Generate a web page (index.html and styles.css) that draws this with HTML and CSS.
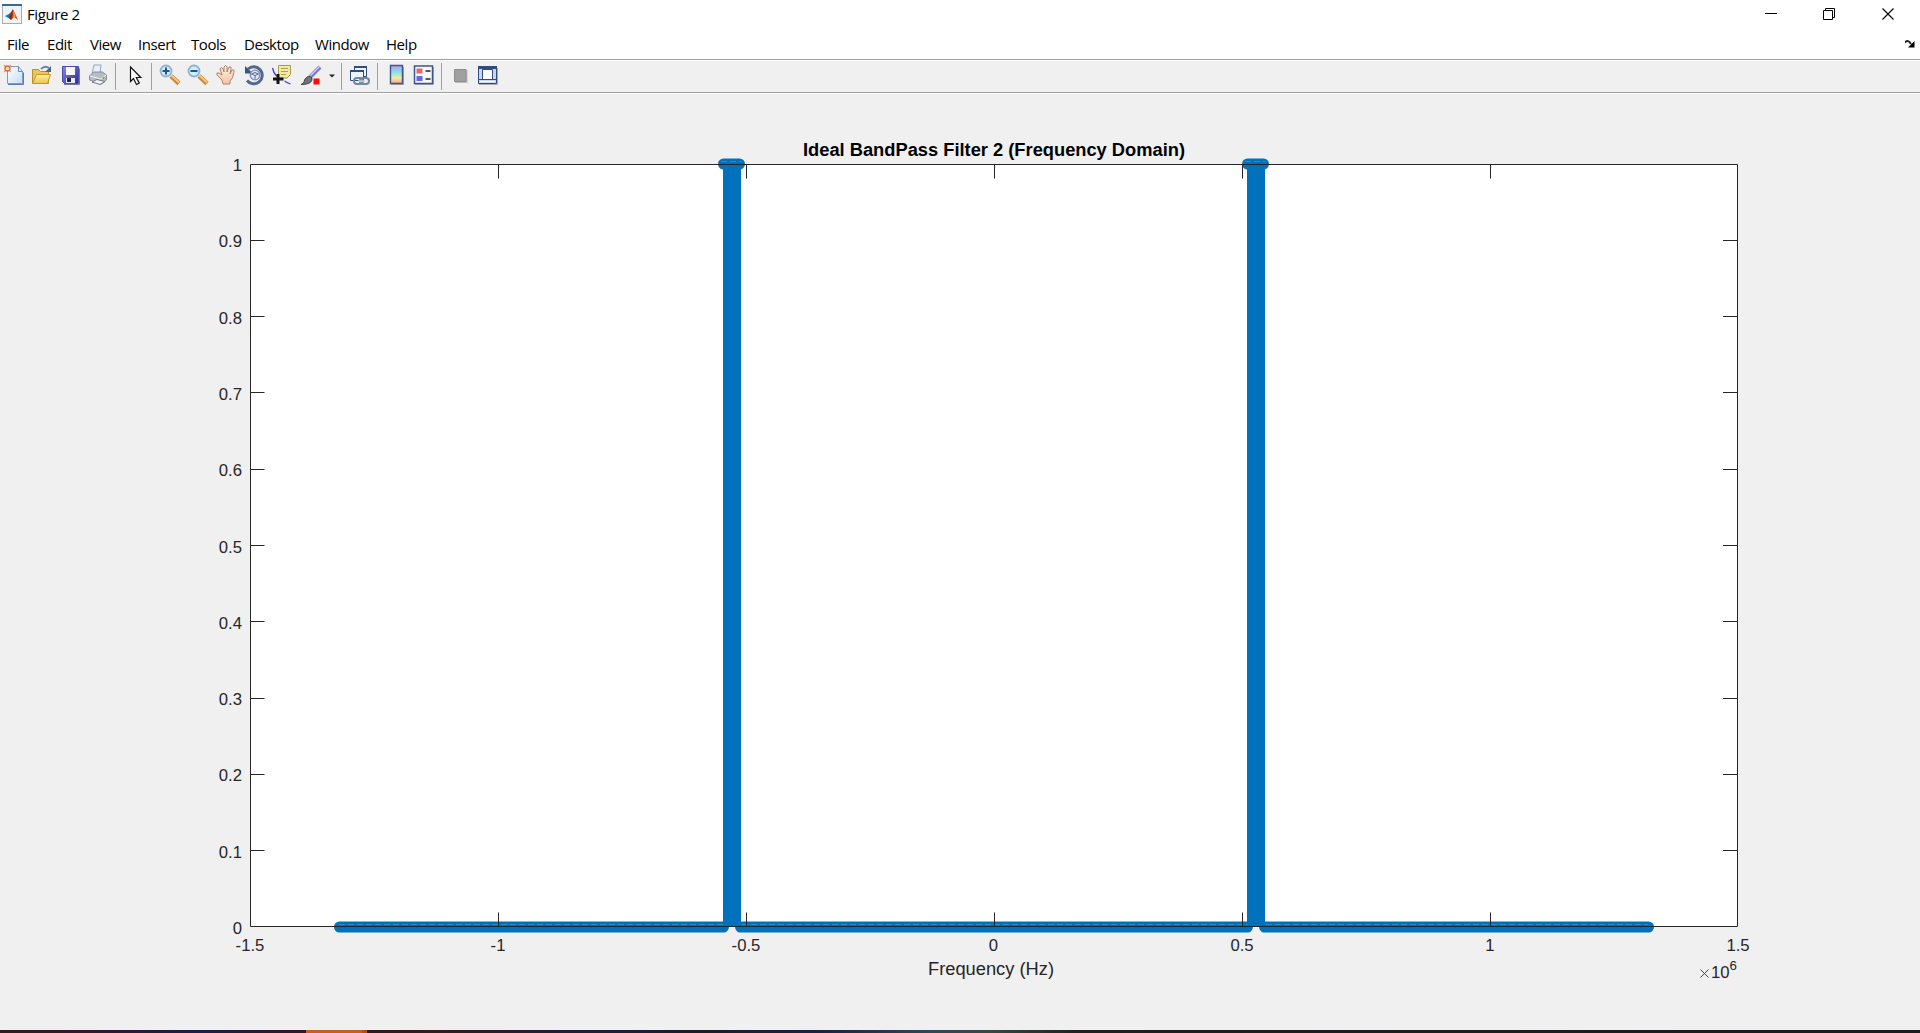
FILE: index.html
```html
<!DOCTYPE html>
<html lang="en">
<head>
<meta charset="utf-8">
<title>Figure 2</title>
<link rel="stylesheet" href="styles.css">
</head>
<body>
<header class="titlebar">
  <svg class="logo" width="20" height="20" viewBox="0 0 20 20"><rect x=".5" y=".5" width="19" height="19" fill="#f0f3f5" stroke="#a3adb3"/><path d="M0 1h20" stroke="#376b91" stroke-width="2"/><path d="M3 12l4-2 4-4 1 3-4 6z" fill="#28739b"/><path d="M7 14l4-9 5 11-4-3-3 3z" fill="#d65016"/><path d="M11 5l-1 9-1 2-2-3z" fill="#7e2d20"/><path d="M11.500 6l2 7-2 1z" fill="#f3a43a"/></svg>
  <span class="window-name">Figure 2</span>
  <svg class="controls" width="144" height="28" viewBox="0 0 144 28"><g fill="none" stroke="#000"><path d="M5 13.500h12"/><path d="M63.500 10.500h9v9h-9zM65.500 10.500v-2h9v9h-2"/><path d="M122.500 8.500l11 11m0-11l-11 11" stroke-width="1.100"/></g></svg>
</header>
<nav class="menubar">
  <span class="m-file">File</span><span class="m-edit">Edit</span><span class="m-view">View</span><span class="m-insert">Insert</span><span class="m-tools">Tools</span><span class="m-desktop">Desktop</span><span class="m-window">Window</span><span class="m-help">Help</span>
  <svg class="dock" width="10" height="8" viewBox="0 0 10 8"><path d="M0 2.500Q3-1 6 4" fill="none" stroke="#222" stroke-width="2"/><path d="M9.500 1v6.500H3z" fill="#000"/></svg>
</nav>
<div class="toolbar">
<svg width="520" height="31" viewBox="0 61 520 31">
  <defs>
    <linearGradient id="page" x1="0" y1="0" x2="1" y2="1"><stop stop-color="#fff"/><stop offset="1" stop-color="#c5dcf7"/></linearGradient>
    <linearGradient id="gold" x1="0" y1="0" x2="0" y2="1"><stop stop-color="#fff09a"/><stop offset="1" stop-color="#edc24d"/></linearGradient>
    <linearGradient id="disk" x1="0" y1="0" x2="1" y2="1"><stop stop-color="#8889e6"/><stop offset="1" stop-color="#2c2d91"/></linearGradient>
    <linearGradient id="spectrum" x1="0" y1="0" x2="0" y2="1"><stop stop-color="#b79df0"/><stop offset=".35" stop-color="#85dcf0"/><stop offset=".7" stop-color="#f3ec9a"/><stop offset="1" stop-color="#f5a38e"/></linearGradient>
    <linearGradient id="skin" x1="0" y1="0" x2="0" y2="1"><stop stop-color="#fff2e4"/><stop offset="1" stop-color="#f4c6a1"/></linearGradient>
  </defs>
  <path d="M115.500 63v27M151.500 63v27M341.500 63v27M377.500 63v27M441.500 63v27" stroke="#a0a0a0"/>
  <path d="M7.500 66.500h11l4 5v12h-15z" fill="url(#page)" stroke="#7f9bc8"/><path d="M18.500 66.500v5h4" fill="none" stroke="#6b87b4"/><path d="M8 84.500h15.500v-12" fill="none" stroke="#5c78a8"/><path d="M4 65l7 7m0-7l-7 7" stroke="#f0a078" stroke-width="1.300"/><circle cx="7.500" cy="68.500" r="2.500" fill="#ffd9a0" stroke="#d86a3c" stroke-width="1.300"/>
  <path d="M32.500 83.500v-14h6l2 2h8v12z" fill="#e9c85b" stroke="#b8922c"/><path d="M32.500 83.500l4-9h14l-3 9z" fill="url(#gold)" stroke="#c09a2c"/><path d="M41 69q4-4 8-1" fill="none" stroke="#6483ad" stroke-width="1.800"/><path d="M51 66v6h-6z" fill="#49678f"/>
  <path d="M62.500 66.500h16v17h-14l-2-2z" fill="url(#disk)" stroke="#4a4bb0"/><path d="M66 67h9v8h-9z" fill="#f4f6fc"/><path d="M66 78h9v5h-9z" fill="#e9edf5"/><path d="M67 78h4v4h-4z" fill="#222554"/><path d="M64 84.500h15.500v-16" fill="none" stroke="#7778ad"/>
  <path d="M92 74l2-9h7l-1 9z" fill="#e6f0ff" stroke="#8fa4c6"/><path d="M89.500 76l4-4h9l4 3v5l-5 4-12-4z" fill="#b9bcc2" stroke="#8a8d94"/><path d="M90 76l11 3 5-4" fill="none" stroke="#f5f5f5"/><path d="M92 82l8 2.500 5-3-8-2z" fill="#eef3f8" stroke="#73777d"/><circle cx="103.500" cy="78" r="1" fill="#61a64e"/>
  <path d="M130.500 67v14.500l3-3 3 6 2.800-1.400-3-5.600h4.500z" fill="#fff" stroke="#111" stroke-width="1.200"/>
  <g id="lens"><path d="M171 76l8 7.500" stroke="#c58a3b" stroke-width="4.500"/><path d="M171 75l8 7.500" stroke="#f8c57a" stroke-width="2"/><circle cx="166" cy="71" r="5.500" fill="#cfeffd" stroke="#8fb0d8" stroke-width="1.800"/></g><path d="M162.500 71h7m-3.500-3.500v7" stroke="#24508f" stroke-width="2"/>
  <use href="#lens" x="28"/><path d="M190.500 71h7" stroke="#24508f" stroke-width="2"/>
  <path d="M223 84l-1-4-5-5q-1-3 2-2l3 2-2-6q1-3 3 0l1 3v-5q2-3 3 0v5l2-5q3-1 2 2l-1 5 2-4q3-1 2 2-1 7-4 9v3z" fill="url(#skin)" stroke="#ab8270"/>
  <path d="M248 69A8.500 8.500 0 1 1 247 80.500" fill="none" stroke="#53678f" stroke-width="3"/><path d="M245 66v7.500h8z" fill="#3c527f"/><circle cx="255" cy="75" r="4.800" fill="#e5e9f3" stroke="#7b8bab" stroke-width="1.300"/><path d="M251.500 74l3.500-1.500 3.500 1.500-3.500 1.500zM255 75.500v3.500" stroke="#536894" fill="none"/>
  <path d="M272.500 68q1 5 4 8m8 5q3 2 6 3" fill="none" stroke="#3d38ff" stroke-width="1.300"/><path d="M278.500 65.500h12v9l-3.500 3.500h-8.500z" fill="#f1eb9d" stroke="#a39b56"/><path d="M281 68.500h7m-7 3h7m-7 3h5" stroke="#a69e66"/><path d="M273 79h10.500m-5.500-5v10" stroke="#151515" stroke-width="3"/>
  <path d="M310.500 76.500L320 67" stroke="#7478c2" stroke-width="4"/><path d="M310.500 75.500l9-9" stroke="#cdd0f8" stroke-width="1.500"/><path d="M301 84.500q3 0 4-5.500 4-5 7-1 1 6.500-11 6.500" fill="#707378" stroke="#404348"/><path d="M313.500 78.500h6v6h-6z" fill="#f90c0c"/><path d="M329 74.500h6l-3 3z" fill="#222"/>
  <path d="M354.500 66.500h12v10h-12z" fill="#edf4ff" stroke="#304d80"/><path d="M354 67h13" stroke="#304d80" stroke-width="2"/><path d="M350.500 70.500h13v10h-13z" fill="#edf4ff" stroke="#304d80"/><path d="M350 71h14" stroke="#304d80" stroke-width="2"/><g fill="none" stroke="#73889f" stroke-width="2"><rect x="354" y="78" width="9" height="6" rx="3"/><rect x="360" y="78" width="9" height="6" rx="3"/></g><path d="M358 81h7" stroke="#c4d0de" stroke-width="1.500"/>
  <path d="M391 84.500h12.500V67" fill="none" stroke="#aaa"/><path d="M390.500 65.500h12v18h-12z" fill="url(#spectrum)" stroke="#40558a" stroke-width="1.400"/>
  <path d="M415 84.500h18.500V67" fill="none" stroke="#aaa"/><path d="M414.500 66h18v17.500h-18z" fill="#f6f8ff" stroke="#3d568a" stroke-width="1.500"/><path d="M416.500 68.500h6v5h-6z" fill="#e4686a"/><path d="M416.500 76h6v5h-6z" fill="#6767e2"/><path d="M425.500 71h5m-5 8h5" stroke="#222" stroke-width="1.500"/>
  <path d="M455 70h12.500v13H455z" fill="#bdbdbd"/><path d="M454.500 69.500h11.500v12h-11.500z" fill="#a0a0a0" stroke="#8e8e8e"/>
  <path d="M479 84.500h18.500V68" fill="none" stroke="#aaa"/><path d="M478.500 66.500h18v17h-18z" fill="#c9d6eb" stroke="#304d83"/><path d="M478 67.500h19" stroke="#304d83" stroke-width="3"/><path d="M482.500 69.500h10v10h-10z" fill="#fff" stroke="#304d83"/><path d="M479 79.500h17" stroke="#304d83"/><path d="M480 81.500h15" stroke="#fff"/>
</svg>
</div>
<main class="figure">
<svg class="chart" width="1920" height="936" viewBox="0 94 1920 936">
  <path d="M250 164h1488v763H250z" fill="#fff"/>
  <g class="stems"><path d="M723 160h18v767h-18zM1247 160h18v767h-18z"/><rect x="718" y="158.500" width="27" height="11" rx="5.500"/><rect x="1242" y="158.500" width="27" height="11" rx="5.500"/>
  <path d="M339.500 921.500H729v5q0 4-4 6H339.500a5.500 5.500 0 0 1 0-11zM735 921.500h518v5q0 4-4 6H739q-4-2-4-6zM1259 921.500h389.500a5.500 5.500 0 0 1 0 11H1263q-4-2-4-6z"/></g>
  <path class="sheen" d="M339 924.500h384M742 924.500h505M1266 924.500h382M721 161.500h21M1245 161.500h21"/>
  <path class="axis" d="M250.500 164.500h1487v762h-1487zM498.500 165v13.500M746.500 165v13.500M994.500 165v13.500M1242.500 165v13.500M1490.500 165v13.500M498.500 926v-13.500M746.500 926v-13.500M994.500 926v-13.500M1242.500 926v-13.500M1490.500 926v-13.500M251 240.500h13.500M251 316.500h13.500M251 392.500h13.500M251 469.500h13.500M251 545.500h13.500M251 621.500h13.500M251 698.500h13.500M251 774.500h13.500M251 850.500h13.500M1737 240.500h-14M1737 316.500h-14M1737 392.500h-14M1737 469.500h-14M1737 545.500h-14M1737 621.500h-14M1737 698.500h-14M1737 774.500h-14M1737 850.500h-14"/>
  <text class="title" x="803" y="156" textLength="382">Ideal BandPass Filter 2 (Frequency Domain)</text>
  <g class="label y-label"><text x="242" y="171">1</text><text x="242" y="247">0.9</text><text x="242" y="324">0.8</text><text x="242" y="400">0.7</text><text x="242" y="476">0.6</text><text x="242" y="553">0.5</text><text x="242" y="629">0.4</text><text x="242" y="705">0.3</text><text x="242" y="781">0.2</text><text x="242" y="858">0.1</text><text x="242" y="934">0</text></g>
  <g class="label x-label"><text x="250" y="951">-1.5</text><text x="498" y="951">-1</text><text x="746" y="951">-0.5</text><text x="993.500" y="951">0</text><text x="1242" y="951">0.5</text><text x="1490" y="951">1</text><text x="1738" y="951">1.5</text></g>
  <text class="caption" x="928" y="975" textLength="126">Frequency (Hz)</text>
  <path d="M1700.500 969.500l8 8m0-8l-8 8" stroke="#444"/><text class="label" x="1711" y="978">10</text><text class="power" x="1729.500" y="970">6</text>
</svg>
</main>
<footer class="taskbar"></footer>
</body>
</html>
```
FILE: styles.css
```css
* { box-sizing: border-box; }
body { margin: 0; width: 1920px; height: 1033px; overflow: hidden; display: flex; flex-direction: column; background: #f0f0f0; font-family: "Open Sans", sans-serif; color: #000; }
svg { display: block; flex: none; }
.titlebar { height: 29px; flex: none; display: flex; align-items: flex-start; background: #fff; padding: 0 16px 0 2px; }
.logo { margin-top: 4px; }
.window-name { margin-left: 5px; font-size: 15px; line-height: 29px; letter-spacing: -.4px; }
.controls { margin-left: auto; }
.menubar { height: 31px; flex: none; display: flex; background: #fff; border-bottom: 1px solid #a0a0a0; padding: 0 5px 0 7px; font-size: 15px; line-height: 31px; letter-spacing: -.45px; white-space: nowrap; }
.m-file { width: 40px; } .m-edit { width: 43px; } .m-view { width: 48px; } .m-insert { width: 53px; }
.m-tools { width: 53px; } .m-desktop { width: 71px; } .m-window { width: 71px; } .m-help { width: 40px; }
.dock { margin: 11px 0 0 auto; }
.toolbar { height: 33px; flex: none; border-top: 1px solid #fff; border-bottom: 1px solid #a0a0a0; background: #f0f0f0; }
.figure { height: 937px; flex: none; border-top: 1px solid #fff; }
.stems { fill: #0072bd; }
.sheen { fill: none; stroke: #3c91c9; stroke-width: 1; stroke-dasharray: 6 3; stroke-opacity: .7; }
.axis { fill: none; stroke: #262626; stroke-width: 1; }
.chart text { font-family: "Liberation Sans", sans-serif; fill: #262626; }
.chart .title { font-size: 18.3px; font-weight: 700; fill: #000; }
.label { font-size: 16.7px; }
.y-label { text-anchor: end; }
.x-label { text-anchor: middle; }
.caption { font-size: 18.3px; }
.power { font-size: 13.3px; }
.taskbar { height: 3px; flex: none; background: linear-gradient(90deg, transparent 306px, #c26020 306px 362px, #b25018 362px 367px, transparent 367px), linear-gradient(90deg, #34191f 0, #30192a 90px, #1b1c48 200px, #2d1927 290px, #2e191d 370px, #301d20 430px, #1c1e38 620px, #1d1c24 700px, #1c2042 820px, #334653 930px, #3b4642 990px, #201e1f 1080px, #1c1a1c 1920px); }
```
